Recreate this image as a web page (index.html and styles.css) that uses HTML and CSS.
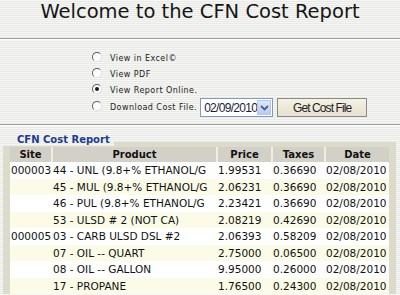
FILE: index.html
```html
<!DOCTYPE html>
<html lang="en">
<head>
  <meta charset="UTF-8" />
  <title>CFN Cost Report</title>
  <link rel="stylesheet" href="styles.css">
</head>
<body>
  <h1 class="title">Welcome to the CFN Cost Report</h1>
  <div class="rule"></div>

  <div class="options">
    <label class="option"><span class="radio"></span>View in Excel©</label>
    <label class="option"><span class="radio"></span>View PDF</label>
    <label class="option"><span class="radio checked"></span>View Report Online.</label>
    <label class="option option-download">
      <span class="radio"></span>Download Cost File.
      <span class="date-select">
        <span class="date-value">02/09/2010</span>
        <span class="date-arrow">
          <svg width="9" height="6" viewBox="0 0 9 6"><path d="M1 1 L4.5 4.5 L8 1" fill="none" stroke="#4d6185" stroke-width="1.8"/></svg>
        </span>
      </span>
      <span class="get-btn">Get Cost File</span>
    </label>
  </div>

  <div class="rule rule-bottom"></div>

  <div class="report-head">
    <span class="report-caption">CFN Cost Report</span>
    <span class="report-fill"></span>
  </div>
  <div class="report">
    <table class="cost-table">
      <colgroup>
        <col style="width: 42px">
        <col style="width: 165px">
        <col style="width: 55px">
        <col style="width: 53px">
        <col style="width: 64px">
      </colgroup>
      <tr>
        <th>Site</th><th>Product</th><th>Price</th><th>Taxes</th><th>Date</th>
      </tr>
      <tr><td>000003</td><td>44 - UNL (9.8+% ETHANOL/G</td><td>1.99531</td><td>0.36690</td><td>02/08/2010</td></tr>
      <tr><td></td><td>45 - MUL (9.8+% ETHANOL/G</td><td>2.06231</td><td>0.36690</td><td>02/08/2010</td></tr>
      <tr><td></td><td>46 - PUL (9.8+% ETHANOL/G</td><td>2.23421</td><td>0.36690</td><td>02/08/2010</td></tr>
      <tr><td></td><td>53 - ULSD # 2 (NOT CA)</td><td>2.08219</td><td>0.42690</td><td>02/08/2010</td></tr>
      <tr><td>000005</td><td>03 - CARB ULSD DSL #2</td><td>2.06393</td><td>0.58209</td><td>02/08/2010</td></tr>
      <tr><td></td><td>07 - OIL -- QUART</td><td>2.75000</td><td>0.06500</td><td>02/08/2010</td></tr>
      <tr><td></td><td>08 - OIL -- GALLON</td><td>9.95000</td><td>0.26000</td><td>02/08/2010</td></tr>
      <tr><td></td><td>17 - PROPANE</td><td>1.76500</td><td>0.24300</td><td>02/08/2010</td></tr>
    </table>
  </div>
</body>
</html>
```

FILE: styles.css
```css
html {
  background: repeating-linear-gradient(to bottom, #f6f6f4 0, #f6f6f4 1px, #e9e9e6 1px, #e9e9e6 2px);
}

body {
  margin: 0;
  width: 400px;
  font-family: "DejaVu Sans", Verdana, sans-serif;
  color: #111;
  overflow: hidden;
}

.title {
  margin: 0;
  font-size: 19.5px;
  font-weight: normal;
  text-align: center;
  line-height: 23px;
  color: #151515;
}

.rule {
  margin-top: 15px;
  height: 1px;
  background-color: #9d9d9d;
  border-bottom: 1px solid #fdfdfd;
}

.rule-bottom {
  margin-top: 7px;
}

.options {
  display: flex;
  flex-direction: column;
  padding-left: 92px;
  margin-top: 10px;
}

.option {
  display: flex;
  align-items: center;
  height: 16px;
  font-size: 8px;
  letter-spacing: 0.45px;
  color: #222;
}

.option-download {
  height: 19px;
}

.radio {
  width: 8px;
  height: 8px;
  border-radius: 50%;
  border: 1px solid;
  border-color: #5e5e5e #dedede #dedede #5e5e5e;
  background-color: #fdfdfd;
  margin-right: 8px;
  margin-top: -3px;
  position: relative;
}

.radio.checked::after {
  content: "";
  position: absolute;
  left: 2px;
  top: 2px;
  width: 4px;
  height: 4px;
  border-radius: 50%;
  background-color: #1a1a1a;
}

.date-select {
  display: flex;
  align-items: center;
  margin-left: 3px;
  width: 71px;
  height: 17px;
  border: 1px solid #7f9db9;
  background-color: #fff;
  letter-spacing: 0;
}

.date-value {
  flex: 1;
  font-family: "Liberation Sans", Arial, sans-serif;
  font-size: 12px;
  letter-spacing: -0.7px;
  color: #1b1b3a;
  padding-left: 3px;
}

.date-arrow {
  width: 14px;
  height: 15px;
  margin-right: 1px;
  display: flex;
  align-items: center;
  justify-content: center;
  background: linear-gradient(#dbe6fd, #b9cbf5);
  border: 1px solid #b6c6ea;
  box-sizing: border-box;
}

.get-btn {
  margin-left: 4px;
  width: 88px;
  height: 17px;
  display: flex;
  align-items: center;
  justify-content: center;
  border: 1px solid #8a8a80;
  background: linear-gradient(#f3f1e6, #e6e2d1);
  font-family: "Liberation Sans", Arial, sans-serif;
  font-size: 12px;
  letter-spacing: -0.9px;
  color: #222;
}

.report-head {
  display: flex;
  align-items: flex-end;
  margin-top: 7px;
  padding-left: 17px;
  margin-right: 4px;
}

.report-caption {
  font-size: 10px;
  font-weight: bold;
  line-height: 13px;
  color: #1f3c8a;
}

.report-fill {
  flex: 1;
  height: 4px;
  margin-left: 4px;
  background-color: #dcdacb;
}

.report {
  margin: 0 4px 0 3px;
  padding: 1px 4px 0 7px;
  background-color: #dcdacb;
}

.cost-table {
  table-layout: fixed;
  width: 379px;
  border-collapse: collapse;
  font-size: 10.5px;
}

.cost-table th {
  height: 15px;
  padding: 0;
  font-size: 10px;
  font-weight: bold;
  text-align: center;
  background-color: #d3d1c7;
  border-left: 2px solid #eeede6;
}

.cost-table th:first-child {
  border-left: none;
}

.cost-table td {
  height: 16.5px;
  padding: 0 0 0 1px;
  white-space: nowrap;
  overflow: hidden;
}

.cost-table tr:nth-child(even) td {
  background-color: #ffffff;
}

.cost-table tr:nth-child(odd) td {
  background-color: #fbfbe7;
}
```
